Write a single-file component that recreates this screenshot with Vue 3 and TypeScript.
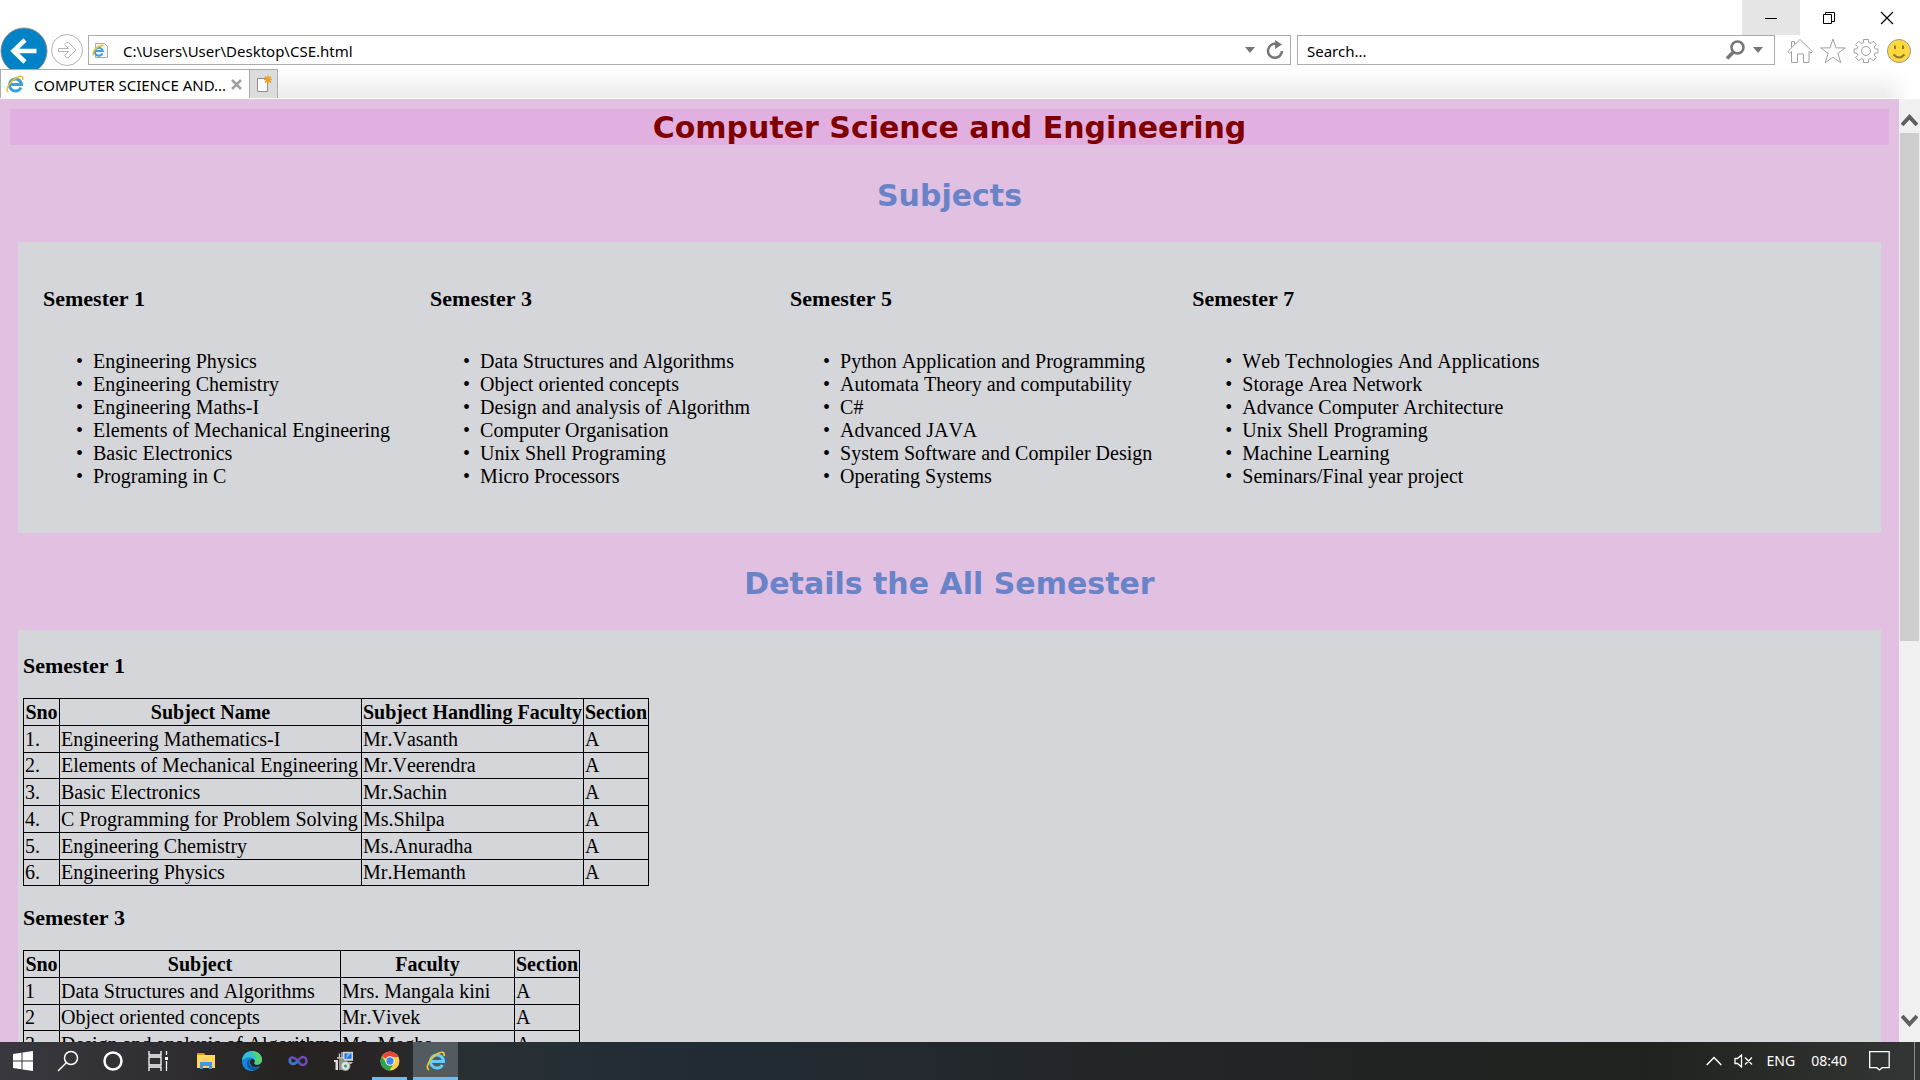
<script setup lang="ts">
import { ref } from 'vue'

interface Semester {
  name: string
  subjects: string[]
}

interface Detail {
  name: string
  subjectHead: string
  facultyHead: string
  layout: string
  rows: string[][]
}

const address = ref('C:\\Users\\User\\Desktop\\CSE.html')
const query = ref('')

const semesters: Semester[] = [
  {
    name: 'Semester 1',
    subjects: ['Engineering Physics', 'Engineering Chemistry', 'Engineering Maths-I', 'Elements of Mechanical Engineering', 'Basic Electronics', 'Programing in C'],
  },
  {
    name: 'Semester 3',
    subjects: ['Data Structures and Algorithms', 'Object oriented concepts', 'Design and analysis of Algorithm', 'Computer Organisation', 'Unix Shell Programing', 'Micro Processors'],
  },
  {
    name: 'Semester 5',
    subjects: ['Python Application and Programming', 'Automata Theory and computability', 'C#', 'Advanced JAVA', 'System Software and Compiler Design', 'Operating Systems'],
  },
  {
    name: 'Semester 7',
    subjects: ['Web Technologies And Applications', 'Storage Area Network', 'Advance Computer Architecture', 'Unix Shell Programing', 'Machine Learning', 'Seminars/Final year project'],
  },
]

const details: Detail[] = [
  {
    name: 'Semester 1',
    subjectHead: 'Subject Name',
    facultyHead: 'Subject Handling Faculty',
    layout: 'first',
    rows: [
      ['1.', 'Engineering Mathematics-I', 'Mr.Vasanth', 'A'],
      ['2.', 'Elements of Mechanical Engineering', 'Mr.Veerendra', 'A'],
      ['3.', 'Basic Electronics', 'Mr.Sachin', 'A'],
      ['4.', 'C Programming for Problem Solving', 'Ms.Shilpa', 'A'],
      ['5.', 'Engineering Chemistry', 'Ms.Anuradha', 'A'],
      ['6.', 'Engineering Physics', 'Mr.Hemanth', 'A'],
    ],
  },
  {
    name: 'Semester 3',
    subjectHead: 'Subject',
    facultyHead: 'Faculty',
    layout: 'second',
    rows: [
      ['1', 'Data Structures and Algorithms', 'Mrs. Mangala kini', 'A'],
      ['2', 'Object oriented concepts', 'Mr.Vivek', 'A'],
      ['3', 'Design and analysis of Algorithms', 'Ms. Megha', 'A'],
    ],
  },
]
</script>

<template>
  <div class="screen">
    <header class="chrome">
      <div class="titlebar">
        <button class="win min" aria-label="Minimize">
          <svg width="14" height="14" viewBox="0 0 14 14"><path d="M1 7.500h12" stroke="#000" /></svg>
        </button>
        <button class="win" aria-label="Restore">
          <svg width="14" height="14" viewBox="0 0 14 14" fill="none" stroke="#000"><path d="M1.500 3.500h8v9h-8zM3.500 3.500v-2h9v9h-3" /></svg>
        </button>
        <button class="win" aria-label="Close">
          <svg width="14" height="14" viewBox="0 0 14 14"><path d="M1 1l12 12M13 1L1 13" stroke="#000" stroke-width="1.200" /></svg>
        </button>
      </div>
      <div class="navbar">
        <button class="back" aria-label="Back">
          <svg width="48" height="48" viewBox="0 0 48 48">
            <circle cx="24" cy="24" r="23" fill="#0082c6" stroke="#8b8b8b" />
            <path d="M36.500 24H14M25 13L13.500 24 25 35" fill="none" stroke="#fff" stroke-width="4.500" />
          </svg>
        </button>
        <button class="forward" aria-label="Forward">
          <svg width="32" height="32" viewBox="0 0 32 32" fill="none" stroke="#b4b4b4">
            <circle cx="16" cy="16" r="15.500" />
            <path d="M7.500 14.500h10l-4-4 2-2h2l7.500 7.500-7.500 7.500h-2l-2-2 4-4h-10z" />
          </svg>
        </button>
        <form class="field address" @submit.prevent>
          <svg width="17" height="17" viewBox="0 0 17 17">
            <path d="M3.500 1.500h9l3 3v11h-12z" fill="#f5f5f5" stroke="#aaa" />
            <path d="M10.500 11.500A4 4 0 1 1 10.800 9H4" fill="none" stroke="#3aa0dc" stroke-width="2" />
            <path d="M1.500 13.500C0 9 6 3 11.500 3.500" fill="none" stroke="#f0bd28" stroke-width="1.500" />
          </svg>
          <input v-model="address" type="text" aria-label="Address" spellcheck="false" />
          <button type="button" class="caret" aria-label="Show address list">
            <svg width="10" height="6" viewBox="0 0 10 6"><path d="M0 0h10L5 6z" fill="#767676" /></svg>
          </button>
          <button type="button" class="caret" aria-label="Refresh">
            <svg width="18" height="20" viewBox="0 0 18 20">
              <path d="M10.500 4A7 7 0 1 0 16 11" fill="none" stroke="#767676" stroke-width="2.500" />
              <path d="M9 0l7 4.500L9 9z" fill="#767676" />
            </svg>
          </button>
        </form>
        <form class="field search" @submit.prevent>
          <input v-model="query" type="text" aria-label="Search" placeholder="Search..." />
          <button type="submit" class="caret" aria-label="Search the web">
            <svg width="20" height="20" viewBox="0 0 20 20" fill="none" stroke="#767676">
              <circle cx="12.500" cy="7.500" r="6" stroke-width="2.500" />
              <path d="M8.500 12L2 18.500" stroke-width="3.500" />
            </svg>
          </button>
          <button type="button" class="caret" aria-label="Search providers">
            <svg width="10" height="6" viewBox="0 0 10 6"><path d="M0 0h10L5 6z" fill="#767676" /></svg>
          </button>
        </form>
        <div class="tools">
          <button aria-label="Home">
            <svg width="26" height="26" viewBox="0 0 26 26" fill="none" stroke="#a0a0a0"><path d="M.7 13.500L13 1.500l12.300 12-1.300 1.500-2-1.500V24.500h-5.500V16h-6v8.500H4.500V13.500L2.500 15zM4.500 9.500V3.500h3v3" /></svg>
          </button>
          <button aria-label="Favorites">
            <svg width="26" height="26" viewBox="0 0 26 26" fill="none" stroke="#a0a0a0"><path d="M13 1l3 8.900h9.300l-7.500 5.400 3 9.500-7.800-5.700-7.800 5.700 3-9.500L.7 9.900H10z" /></svg>
          </button>
          <button aria-label="Tools">
            <svg width="26" height="26" viewBox="0 0 26 26" fill="none" stroke="#a0a0a0">
              <circle cx="13" cy="13" r="4.500" />
              <path d="M10.500 1.500h5v3l2.500 1 2.200-2.200 3.300 3.300L21.200 8.800l1 2.200h2.800v4h-2.800l-1 2.300 2.300 2.200-3.300 3.300-2.200-2.300-2.500 1v3h-5v-3l-2.500-1-2.200 2.300-3.300-3.300 2.300-2.200-1-2.300H1v-4h2.800l1-2.200L2.500 6.600l3.300-3.300L8 5.500l2.500-1z" />
            </svg>
          </button>
          <button aria-label="Send a smile">
            <svg width="26" height="26" viewBox="0 0 26 26">
              <circle cx="13" cy="13" r="11.500" fill="#ffd83d" stroke="#999" />
              <path d="M9 7.500v3.500M17 7.500v3.500" stroke="#8c7830" stroke-width="2" />
              <path d="M7.500 16.500q5.500 6 11 0" fill="none" stroke="#8c7830" stroke-width="2" />
            </svg>
          </button>
        </div>
      </div>
      <div class="tabs">
        <div class="tab">
          <svg width="18" height="18" viewBox="0 0 18 18">
            <path d="M15 12.500A6 6 0 1 1 15.500 9.500H5" fill="none" stroke="#3aa0dc" stroke-width="3" />
            <path d="M2 17C-1 14 4 6 11 2.500 15 .5 18 1 16.500 5" fill="none" stroke="#f0bd28" stroke-width="1.500" />
          </svg>
          <span class="tab-name">COMPUTER SCIENCE AND...</span>
          <button aria-label="Close tab">
            <svg width="11" height="11" viewBox="0 0 11 11"><path d="M1 1l9 9M10 1l-9 9" stroke="#a0a0a0" stroke-width="2.500" /></svg>
          </button>
        </div>
        <button class="new-tab" aria-label="New tab">
          <svg width="16" height="18" viewBox="0 0 16 18">
            <path d="M1.500 3.500h10v13h-10z" fill="#fafafa" stroke="#8d8d8d" />
            <path d="M12 .5v8M8 4.500h8M9 1.500l6 6M15 1.500l-6 6" stroke="#f0a020" stroke-width="1.500" />
          </svg>
        </button>
      </div>
    </header>

    <div class="viewport">
      <main class="page">
        <h1>Computer Science and Engineering</h1>
        <h2>Subjects</h2>
        <section class="panel subjects">
          <div v-for="sem in semesters" :key="sem.name" class="semester">
            <h3>{{ sem.name }}</h3>
            <ul>
              <li v-for="s in sem.subjects" :key="s">{{ s }}</li>
            </ul>
          </div>
        </section>
        <h2>Details the All Semester</h2>
        <section class="panel details">
          <template v-for="d in details" :key="d.name">
            <h3>{{ d.name }}</h3>
            <table :class="d.layout">
              <thead>
                <tr>
                  <th class="sno">Sno</th>
                  <th class="subject">{{ d.subjectHead }}</th>
                  <th class="faculty">{{ d.facultyHead }}</th>
                  <th class="section">Section</th>
                </tr>
              </thead>
              <tbody>
                <tr v-for="row in d.rows" :key="row[0]">
                  <td v-for="(cell, i) in row" :key="i">{{ cell }}</td>
                </tr>
              </tbody>
            </table>
          </template>
        </section>
      </main>
      <div class="scrollbar" aria-hidden="true">
        <svg width="17" height="13" viewBox="0 0 17 13"><path d="M1 11l7.500-8 7.500 8" fill="none" stroke="#606060" stroke-width="4" /></svg>
        <div class="track"><div class="thumb"></div></div>
        <svg width="17" height="13" viewBox="0 0 17 13"><path d="M1 2l7.500 8L16 2" fill="none" stroke="#606060" stroke-width="4" /></svg>
      </div>
    </div>

    <footer class="taskbar">
      <button aria-label="Start">
        <svg width="20" height="20" viewBox="0 0 20 20" fill="#fff"><path d="M0 3l8.500-1.200v7.700H0zM9.500 1.600L20 0v9.500H9.500zM0 10.500h8.500v7.700L0 17zM9.500 10.500H20V20L9.500 18.500z" /></svg>
      </button>
      <button aria-label="Search">
        <svg width="22" height="22" viewBox="0 0 22 22" fill="none" stroke="#fff" stroke-width="1.500"><circle cx="14" cy="8" r="6.500" /><path d="M9.300 12.700L1 21" /></svg>
      </button>
      <button aria-label="Cortana">
        <svg width="20" height="20" viewBox="0 0 20 20"><circle cx="10" cy="10" r="8.500" fill="none" stroke="#fff" stroke-width="2.500" /></svg>
      </button>
      <button aria-label="Task view">
        <svg width="20" height="20" viewBox="0 0 20 20" fill="none" stroke="#fff" stroke-width="1.300"><path d="M1 0v4h12V0M1 6h12v8H1zM1 20v-4h12v4M18.500 0v4M18.500 10v10" /><path d="M18.500 6v3" stroke-width="3" /></svg>
      </button>
      <button class="app explorer" aria-label="File Explorer">
        <svg width="20" height="18" viewBox="0 0 20 18"><path d="M1 1h7l2 3H1z" fill="#d89c12" /><path d="M1 3h18v13H1z" fill="#ffd75e" /><path d="M4 17v-7h12v7h-3v-3H7v3z" fill="#3f98e8" /></svg>
      </button>
      <button class="app" aria-label="Edge">
        <svg width="20" height="20" viewBox="0 0 20 20">
          <path d="M0 10C0 4 4 0 10 0s10 4 10 8.500c0 3-2 5-5 5-2 0-3-1-2.300-2 .6-1 .3-3-1.700-3.500-3-.5-4 3-2.500 5.500 2 3.500 6 3.500 9.500 1.500-2 3-5 5-8 5C4 20 0 16 0 10z" fill="#1588dc" />
          <path d="M0 9.500C1 3.500 5 0 10 0c6 0 10 4 10 8.500 0 3-2 5-5 5-2 0-3-1-2.300-2C14 7 6 3.500 0 9.500z" fill="#30bfd0" />
          <path d="M8 .3C15-1 20 4 20 8.500c0 3-2 5-5 5-2 0-3-1-2.300-2C15 8 14 3 8 .3z" fill="#58cf72" />
          <path d="M8 8c-3 6 2 11 9.500 8-4 5-12.500 3.500-12.500-3C5 10 6 8.500 8 8z" fill="#0e559f" />
        </svg>
      </button>
      <button class="app" aria-label="Visual Studio">
        <svg width="20" height="12" viewBox="0 0 20 12" fill="none" stroke-width="2.500">
          <path d="M10 6C7 2.500 5 2.500 4 2.500 2 3 1.500 4.500 1.500 6S3 9 5 9c4 0 6-7 10-7 2 0 3.500 2 3.500 4s-1.500 4-3.500 4c-2 0-4-2-5-4z" stroke="#6d4bb8" />
          <path d="M2 4c0 4 2 5 3 5 2 0 3-1 5-3" stroke="#2f7cc4" />
        </svg>
      </button>
      <button class="app" aria-label="Installer">
        <svg width="20" height="20" viewBox="0 0 20 20">
          <path d="M9 .8h10v9H9z" fill="#d9d5c8" /><path d="M10.500 2.300h7v5.500h-7z" fill="#1c6ff0" />
          <path d="M13 2.300h4.500L12 7.800z" fill="#69bdf8" />
          <path d="M12 11h7l-2 2h-5z" fill="#c8c4b8" />
          <path d="M0 9h4v10H1.500v-8H0z" fill="#ddd" /><path d="M5 8h5v11H5z" fill="#8f8f8f" />
          <path d="M5.500 2.500v4M8 1v6M3 7h6" stroke="#d0d0d0" stroke-width="1.300" />
          <circle cx="11.500" cy="15" r="4.500" fill="#d6e8d4" stroke="#999" /><circle cx="11.500" cy="15" r="1.500" fill="#3c8f9c" />
        </svg>
      </button>
      <button class="app running" aria-label="Chrome">
        <svg width="20" height="20" viewBox="0 0 20 20">
          <circle cx="10" cy="10" r="9.500" fill="#ffcd41" />
          <path d="M10 10L1.800 5.200A9.500 9.500 0 0 1 18.500 6H10z" fill="#e04a3b" />
          <path d="M1.800 5.200A9.500 9.500 0 0 0 9.500 19.500L14 12l-8-.5z" fill="#2da450" />
          <circle cx="10" cy="10" r="4.700" fill="#fff" /><circle cx="10" cy="10" r="3.700" fill="#4285f0" />
        </svg>
      </button>
      <button class="app running active" aria-label="Internet Explorer">
        <svg width="20" height="20" viewBox="0 0 20 20">
          <path d="M16.500 14A6.500 6.500 0 1 1 17.500 10.500H6" fill="none" stroke="#62cdf6" stroke-width="3" />
          <path d="M3 19C-1 17 3 8 11 3c5-3 8-2 7 2" fill="none" stroke="#f5c62c" stroke-width="1.700" />
        </svg>
      </button>
      <div class="tray">
        <button class="chevron" aria-label="Show hidden icons">
          <svg width="16" height="10" viewBox="0 0 16 10"><path d="M.7 9L8 1.500 15.300 9" fill="none" stroke="#fff" stroke-width="1.500" /></svg>
        </button>
        <button class="sound" aria-label="Volume muted">
          <svg width="19" height="14" viewBox="0 0 19 14" fill="none" stroke="#fff"><path d="M1 4.500h2.500l4-3.500v12l-4-3.500H1zM11 3.500l7 7M18 3.500l-7 7" stroke-width="1.300" /></svg>
        </button>
        <span class="lang">ENG</span>
        <time class="clock">08:40</time>
        <button class="notes" aria-label="Notifications">
          <svg width="21" height="20" viewBox="0 0 21 20"><path d="M.7.700h19.500v16h-7L10.500 19l-2.700-2.300H.7z" fill="none" stroke="#fff" stroke-width="1.300" /></svg>
        </button>
      </div>
      <button class="desktop" aria-label="Show desktop"></button>
    </footer>
  </div>
</template>

<style>
body {
  margin: 0;
}
</style>

<style scoped>
.screen {
  display: flex;
  flex-direction: column;
  height: 100vh;
  overflow: hidden;
  background: #fff;
}
button {
  display: flex;
  align-items: center;
  justify-content: center;
  padding: 0;
  border: 0;
  background: none;
}
svg {
  display: block;
  flex: none;
}

/* browser frame */
.chrome {
  flex: none;
  font-family: "Noto Sans", "Open Sans", sans-serif;
  color: #000;
}
.titlebar {
  display: flex;
  justify-content: flex-end;
  height: 35px;
  padding-right: 4px;
}
.win {
  width: 58px;
}
.min {
  background: #e5e5e5;
}
.navbar {
  display: flex;
  align-items: center;
  height: 30px;
  padding-right: 8px;
}
.back {
  flex: none;
  width: 48px;
  height: 30px;
  padding-top: 2px;
}
.forward {
  flex: none;
  width: 32px;
  margin: 0 5px 0 3px;
}
.field {
  display: flex;
  align-items: center;
  box-sizing: border-box;
  height: 30px;
  border: 1px solid #acacac;
  background: #fff;
}
.field input {
  flex: 1;
  min-width: 0;
  padding: 2px 0 0;
  border: 0;
  outline: 0;
  background: none;
  font: 15px/24px "Noto Sans", "Open Sans", sans-serif;
  color: #000;
}
.field input::placeholder {
  color: #000;
  opacity: 1;
}
.address {
  flex: 1;
  gap: 11px;
  padding: 0 6px 0 3px;
}
.address input {
  margin-left: 3px;
}
.search {
  flex: none;
  width: 25%;
  gap: 8px;
  margin: 0 12px 0 6px;
  padding: 0 11px 0 9px;
}
.tools {
  display: flex;
  gap: 7px;
  padding-top: 2px;
}
.tabs {
  position: relative;
  display: flex;
  height: 29px;
  margin-top: 4px;
  border-bottom: 1px solid #fff;
  background: linear-gradient(90deg, transparent calc(100% - 36px), #fff calc(100% - 8px)), linear-gradient(#fff, #ebebeb);
}
.tab {
  display: flex;
  align-items: center;
  box-sizing: border-box;
  width: 250px;
  padding: 0 7px 0 5px;
  border: 1px solid #acacac;
  border-bottom: 0;
  background: #fff;
}
.tab-name {
  flex: 1;
  margin-left: 10px;
  padding-top: 2px;
  font-size: 15px;
  line-height: 24px;
  white-space: nowrap;
}
.new-tab {
  box-sizing: border-box;
  width: 28px;
  border: 1px solid #acacac;
  border-width: 1px 1px 0 0;
  background: #dcdcdc;
}

/* document */
.viewport {
  display: flex;
  flex: 1;
  min-height: 0;
}
.page {
  flex: 1;
  box-sizing: border-box;
  min-width: 0;
  padding: 10px;
  overflow: hidden;
  background: #e1c0e1;
  font: 20px/23px "Liberation Serif", serif;
  font-kerning: none;
  color: #000;
}
h1,
h2 {
  margin: 0;
  padding-top: 2px;
  font-family: "DejaVu Sans", sans-serif;
  font-size: 30px;
  line-height: 34px;
  text-align: center;
}
h1 {
  background: #e1b0e1;
  color: #800000;
}
h2 {
  margin: 32px 0 29px;
  color: #6883c7;
}
h3 {
  margin: 0;
  font-size: 22px;
  line-height: 28px;
}
.panel {
  margin: 0 8px;
  background: #d5d6da;
}
.subjects {
  display: flex;
  padding: 43px 5px 45px;
}
.semester {
  padding: 0 20px;
}
ul {
  margin: 37px 0 0;
  padding: 0 0 0 50px;
}
li::marker {
  content: "•\00a0\00a0";
}
.details {
  padding: 22px 5px;
}
table {
  margin: 18px 0;
  border: 1px solid #000;
  border-collapse: collapse;
}
th,
td {
  padding: 1px;
  border: 1px solid #000;
  line-height: 24px;
  white-space: nowrap;
}
tbody tr:nth-child(4n + 2) td {
  line-height: 23px;
}
.sno {
  width: 33px;
}
.first .subject {
  width: 299px;
}
.second .subject {
  width: 278px;
}
.second .faculty {
  width: 171px;
}
.scrollbar {
  display: flex;
  flex: none;
  flex-direction: column;
  align-items: center;
  box-sizing: border-box;
  width: 21px;
  padding: 15px 0;
  background: #f0f0f0;
}
.track {
  flex: 1;
  align-self: stretch;
  margin: 6px 1px;
}
.thumb {
  height: 58%;
  background: #cdcdcd;
}

/* taskbar */
.taskbar {
  display: flex;
  flex: none;
  height: 38px;
  background: linear-gradient(90deg, #38383e, #302f33 8%, #252220 15%, #292425 19%, #283033 24%, #222c35 35%, #232527 60%, #20221f 86%, #343635);
  color: #fff;
  font: 14px/38px "Noto Sans", "Open Sans", sans-serif;
}
.taskbar > button {
  width: 45px;
}
.taskbar > .app {
  margin-right: 1px;
}
.taskbar > .explorer {
  margin-left: 3px;
}
.taskbar > .running {
  box-sizing: border-box;
  width: 35px;
  margin: 0 6px 0 5px;
  border-top: 3px solid transparent;
  border-bottom: 3px solid #76b9ed;
}
.taskbar > .active {
  width: 45px;
  margin: 0;
  border-top-color: #525b5f;
  background: #525b5f;
}
.tray {
  display: flex;
  flex: 1;
  justify-content: flex-end;
  align-items: center;
  padding-right: 24px;
}
.sound {
  margin: 0 14px 0 12px;
}
.clock {
  margin: 0 22px 0 16px;
}
.taskbar > .desktop {
  width: 6px;
  border-left: 1px solid #8a8b8a;
}
</style>
